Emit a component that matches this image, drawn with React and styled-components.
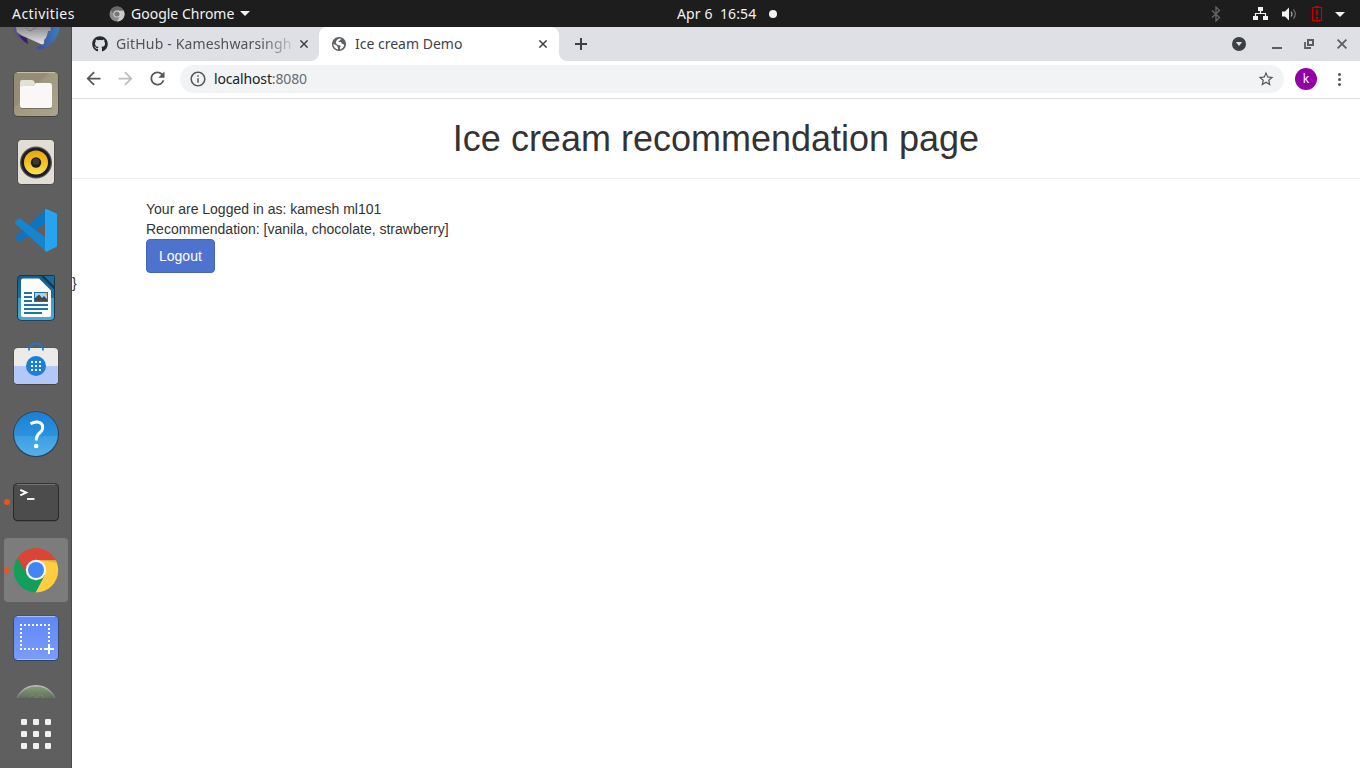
import React from "react";
import styled, { createGlobalStyle, css } from "styled-components";
import { FaGithub } from "react-icons/fa";
import {
  MdArrowBack,
  MdArrowForward,
  MdRefresh,
  MdInfoOutline,
  MdStarBorder,
} from "react-icons/md";

const GlobalStyle = createGlobalStyle`
  *, *::before, *::after { box-sizing: border-box; }
  html, body { margin: 0; padding: 0; background: #fff; }
  body { overflow: hidden; }
  svg { display: block; flex: none; }
`;

const Desktop = styled.div`
  width: 1360px;
  height: 768px;
  display: flex;
  flex-direction: column;
  overflow: hidden;
  font-family: "Noto Sans", "Open Sans", sans-serif;
`;

/* ---------- top bar ---------- */

const TopBar = styled.header`
  flex: none;
  height: 27px;
  display: grid;
  grid-template-columns: 677px auto 1fr;
  align-items: center;
  background: #1d1d1d;
  color: #f2f2f2;
  font-size: 14px;
  line-height: 26px;
  white-space: pre;
`;

const BarLeft = styled.div`
  display: flex;
  align-items: center;
  padding-left: 12px;
`;

const BarLabel = styled.span`
  width: ${(p) => p.$width}px;
  letter-spacing: ${(p) => p.$track || 0}px;
`;

const AppMenu = styled.div`
  display: flex;
  align-items: center;
  margin-left: 34px;
  gap: 6px;
`;

const Clock = styled.div`
  display: flex;
  align-items: center;
  gap: 12px;
`;

const Dot = styled.i`
  width: 8px;
  height: 8px;
  border-radius: 50%;
  background: #f2f2f2;
`;

const StatusArea = styled.div`
  display: flex;
  align-items: center;
  justify-content: flex-end;
  padding-right: 14px;
`;

/* ---------- dock ---------- */

const Workspace = styled.div`
  flex: 1;
  min-height: 0;
  display: flex;
`;

const Dock = styled.nav`
  flex: none;
  width: 72px;
  display: flex;
  flex-direction: column;
  background: #5f5f5f;
  border-right: 1px solid #4b4b4b;
`;

const DockList = styled.div`
  height: 671px;
  overflow: hidden;
`;

const DockSlot = styled.div`
  position: relative;
  height: 68px;
  padding: 2px 3px 2px 4px;
  &:first-child {
    margin-top: -35px;
  }
  ${(p) =>
    p.$running &&
    css`
      &::before {
        content: "";
        position: absolute;
        left: 4px;
        top: 31px;
        width: 6px;
        height: 6px;
        border-radius: 50%;
        background: #e95420;
        z-index: 1;
      }
    `}
`;

const SlotFace = styled.div`
  width: 64px;
  height: 64px;
  border-radius: 4px;
  background: ${(p) => (p.$active ? "#7c7c7c" : "transparent")};
`;

const AppsGrid = styled.div`
  display: grid;
  grid-template-columns: repeat(3, 6px);
  grid-auto-rows: 6px;
  gap: 6px;
  padding: 21px 0 0 21px;
`;

const AppsCell = styled.i`
  border-radius: 1px;
  background: #f0f0ee;
`;

/* ---------- browser ---------- */

const Browser = styled.main`
  flex: 1;
  min-width: 0;
  display: flex;
  flex-direction: column;
  background: #fff;
`;

const TabStrip = styled.div`
  flex: none;
  height: 34px;
  display: flex;
  background: #dee0e5;
  padding-left: 8px;
`;

const Tab = styled.div`
  position: relative;
  display: flex;
  align-items: center;
  height: 34px;
  width: ${(p) => p.$width}px;
  padding: 0 ${(p) => (p.$active ? 12 : 11)}px 0 12px;
  color: ${(p) => (p.$active ? "#3f4247" : "#505358")};
  font-size: 14px;
  ${(p) =>
    p.$active &&
    css`
      background: #fff;
      border-radius: 8px 8px 0 0;
      &::before,
      &::after {
        content: "";
        position: absolute;
        bottom: 0;
        width: 8px;
        height: 8px;
      }
      &::before {
        left: -8px;
        background: radial-gradient(circle at 0 0, transparent 7.5px, #fff 8.2px);
      }
      &::after {
        right: -8px;
        background: radial-gradient(circle at 100% 0, transparent 7.5px, #fff 8.2px);
      }
    `}
`;

const TabTitle = styled.span`
  flex: 1;
  min-width: 0;
  margin: 0 ${(p) => (p.$fade ? 9 : 12)}px 0 8px;
  overflow: hidden;
  white-space: nowrap;
  line-height: 34px;
  letter-spacing: ${(p) => p.$track || 0}px;
  ${(p) =>
    p.$fade &&
    css`
      mask-image: linear-gradient(90deg, #000 calc(100% - 30px), rgba(0, 0, 0, 0.2));
    `}
`;

const NewTab = styled.div`
  display: flex;
  align-items: center;
  margin-left: 16px;
`;

const WindowControls = styled.div`
  margin-left: auto;
  display: flex;
  align-items: center;
  padding-right: 12px;
`;

const Toolbar = styled.div`
  flex: none;
  height: 38px;
  display: flex;
  align-items: center;
  padding: 0 11px 2px;
  border-bottom: 1px solid #dcdce1;
  color: #54575c;
`;

const NavButtons = styled.div`
  display: flex;
  gap: 11px;
  width: 97px;
`;

const AddressBar = styled.div`
  flex: 1;
  height: 28px;
  display: flex;
  align-items: center;
  border-radius: 14px;
  padding: 0 9px;
  background: #f1f3f4;
  font-size: 14px;
`;

const Url = styled.span`
  flex: 1;
  margin-left: 7px;
  color: #6a6d72;
  letter-spacing: -0.15px;
  b {
    font-weight: 400;
    color: #202124;
  }
`;

const Avatar = styled.div`
  width: 22px;
  height: 22px;
  margin: 0 12px 0 11px;
  border-radius: 50%;
  background: #9200a6;
  color: #fff;
  font-size: 12px;
  line-height: 22px;
  text-align: center;
`;

/* ---------- web page ---------- */

const Page = styled.div`
  flex: 1;
  background: #fff;
  color: #333;
  font-family: "Liberation Sans", Arial, sans-serif;
  font-size: 14px;
  line-height: 20px;
`;

const Title = styled.h1`
  margin: 20px 0 0;
  font-size: 36px;
  font-weight: 400;
  line-height: 39px;
  text-align: center;
`;

const Rule = styled.hr`
  margin: 20px 0;
  border: 0;
  border-top: 1px solid #eee;
`;

const Container = styled.div`
  width: 1170px;
  margin: 0 auto;
  padding: 0 15px;
`;

const LogoutButton = styled.button`
  display: block;
  height: 34px;
  padding: 6px 12px;
  border: 1px solid #4366bb;
  border-radius: 4px;
  background: #4e73cf;
  color: #fff;
  font: inherit;
`;

/* ---------- drawings ---------- */

const DockArt = ({ children }) => (
  <svg width="64" height="64" viewBox="4 2 64 64">
    {children}
  </svg>
);

const Thunderbird = () => (
  <DockArt>
    <defs>
      <linearGradient id="tb" x1="0" x2="1">
        <stop offset="0" stopColor="#3f4a9c" />
        <stop offset="1" stopColor="#3a7fc0" />
      </linearGradient>
      <linearGradient id="tbw" x1="0" x2="0" y1="34" y2="52" gradientUnits="userSpaceOnUse">
        <stop offset="0" stopColor="#858589" />
        <stop offset="1" stopColor="#e4e4ea" />
      </linearGradient>
    </defs>
    <path d="M13 34Q14 42 20 47L28 52L26 48L20 43L16 40L15 34Z" fill="#54508f" />
    <path d="M19 43L27 46L28 52Q22 49 19 43Z" fill="#3a2060" />
    <path d="M15 32L17 40L22 43.5L43 53L48 41L51 38L50 32Z" fill="url(#tbw)" />
    <path d="M26 36L30 39L37 35" fill="none" stroke="#777" strokeWidth="1" />
    <path d="M53 34L52 39L48 39L47 45L44 48L45 52L40 53L36 56L39 57.5Q48 56 54 49Q59 42 60 34Z" fill="url(#tb)" />
  </DockArt>
);

const Files = () => (
  <DockArt>
    <defs>
      <linearGradient id="fi" x1="0" y1="0" x2="1" y2="1">
        <stop offset=".4" stopColor="#958c78" />
        <stop offset=".42" stopColor="#a0977f" />
        <stop offset="1" stopColor="#aca48f" />
      </linearGradient>
    </defs>
    <rect x="13.5" y="11.7" width="45" height="45" rx="4.5" fill="#3f3c35" />
    <rect x="14" y="12" width="44" height="44" rx="4" fill="url(#fi)" />
    <path d="M17 12.6H55" stroke="#c9c3b2" />
    <path d="M20 25V22Q20 20 22 20H32Q34 20 35 23L36 25H50V30H20Z" fill="#e2dfd3" />
    <path d="M20 28Q20 26 22 26H33L36 23H50Q52 23 52 25V47Q52 49 50 49H22Q20 49 20 47Z" fill="#766f5d" />
    <path d="M20 27Q20 26 22 26H33L36 23H50Q52 23 52 25V46Q52 48 50 48H22Q20 48 20 46Z" fill="#f9f8f6" />
  </DockArt>
);

const MusicPlayer = () => (
  <DockArt>
    <defs>
      <linearGradient id="mu" x1="0" x2="0" y1="0" y2="1">
        <stop offset="0" stopColor="#e9a60c" />
        <stop offset=".5" stopColor="#f3c021" />
        <stop offset="1" stopColor="#f9df5c" />
      </linearGradient>
    </defs>
    <rect x="17.5" y="11.7" width="37" height="45" rx="4" fill="#454440" />
    <rect x="18" y="12" width="36" height="44" rx="3.5" fill="#e2ded3" />
    <circle cx="36" cy="34.5" r="16" fill="#55565a" />
    <circle cx="36" cy="34.5" r="14.8" fill="#1c1d28" />
    <circle cx="36" cy="34.5" r="12" fill="url(#mu)" />
    <circle cx="36" cy="34.5" r="5.2" fill="#1d1d1d" />
    <circle cx="36" cy="33.5" r="3.2" fill="#383838" />
  </DockArt>
);

const CodeEditor = () => (
  <DockArt>
    <path d="M46 13L15.3 41Q14.6 42 15.4 43L18.3 45.6Q19.2 46.3 20.2 45.6L46 26.4Z" fill="#0e74bd" />
    <path d="M46 55.5L15.3 27.5Q14.6 26.5 15.4 25.5L18.3 22.6Q19.2 22 20.2 22.6L46 42Z" fill="#1585cf" />
    <path d="M46.5 13L56 17.2Q57 17.8 57 19V49.5Q57 50.6 56 51L46.5 55.7Q45 56 45 54.5V14Q45 12.6 46.5 13Z" fill="#28a3f0" />
  </DockArt>
);

const Writer = () => (
  <DockArt>
    <defs>
      <linearGradient id="wr" x1="0" x2="0" y1="0" y2="1">
        <stop offset="0" stopColor="#12608f" />
        <stop offset=".5" stopColor="#1a70a2" />
        <stop offset=".51" stopColor="#3a9ac8" />
        <stop offset="1" stopColor="#4bacd5" />
      </linearGradient>
    </defs>
    <path d="M22 11H53Q55 11 55 13V52Q55 56.7 50 56.7H22Q17 56.7 17 52V16Q17 11 22 11Z" fill="#16384c" />
    <path d="M22 12H41L54 25V52Q54 56 50 56H22Q18 56 18 52V16Q18 12 22 12Z" fill="url(#wr)" />
    <path d="M44 12H54V22Z" fill="#1a6b9c" />
    <path d="M43 12.8L54 24" stroke="#17394d" strokeWidth="1.3" />
    <path d="M23 14.5H39L51 26.5V51Q51 53 49 53H23Q21 53 21 51V16.5Q21 14.5 23 14.5Z" fill="#fcfcfc" />
    <path d="M24 29H32M24 33H32M24 37H32M24 41H48M24 45H48M24 49H42" stroke="#1b74a5" strokeWidth="2" />
    <rect x="34" y="28" width="14" height="10" fill="#1b74a5" />
    <rect x="35" y="29" width="12" height="8" fill="#a8d4ee" />
    <path d="M35 37V34L39 30.5L42 34L44 32L47 35V37Z" fill="#474747" />
    <path d="M44 29H47V32Z" fill="#f6b51e" />
  </DockArt>
);

const Software = () => (
  <DockArt>
    <rect x="13.5" y="15.8" width="45" height="37.2" rx="4.4" fill="#43444a" />
    <rect x="14" y="16" width="44" height="36" rx="4" fill="#ebebea" />
    <path d="M14 34H58V48Q58 52 54 52H18Q14 52 14 48Z" fill="#b4c8f7" />
    <path d="M28.8 18.5A7.2 7.2 0 0 1 43.2 18.5" fill="none" stroke="#1b78d0" strokeWidth="1.8" />
    <circle cx="36" cy="34" r="10" fill="#1b7fda" />
    <path d="M31 30H42M31 34H42M31 38H42" stroke="#fff" strokeWidth="2" strokeDasharray="2 2" />
  </DockArt>
);

const Help = () => (
  <DockArt>
    <defs>
      <linearGradient id="he" x1="0" x2="0" y1="0" y2="1">
        <stop offset="0" stopColor="#1b7fd6" />
        <stop offset=".54" stopColor="#2c92dd" />
        <stop offset=".56" stopColor="#3c9fe3" />
        <stop offset="1" stopColor="#53b1ea" />
      </linearGradient>
    </defs>
    <circle cx="36" cy="34.2" r="23" fill="#2c4254" />
    <circle cx="36" cy="34" r="22" fill="url(#he)" />
    <path d="M30.5 23.8Q34 21.8 37.4 22Q42.7 22.6 42.7 27.5Q42.7 30.4 39.5 33Q36.3 35.5 36.3 40.5" fill="none" stroke="#fff" strokeWidth="2.9" />
    <circle cx="36.2" cy="46" r="2.3" fill="#fff" />
  </DockArt>
);

const Terminal = () => (
  <DockArt>
    <rect x="13" y="15.2" width="46" height="38" rx="4.5" fill="#2a2a2a" />
    <rect x="14" y="16" width="44" height="36" rx="3.8" fill="#4c4c4c" />
    <path d="M17 16.6H55" stroke="#747474" />
    <path d="M20.3 21.8L26.2 24.6L20.3 27.4" fill="none" stroke="#fff" strokeWidth="2" />
    <path d="M27 31H34.5" stroke="#fff" strokeWidth="1.8" />
  </DockArt>
);

const ChromeMark = () => (
  <DockArt>
    <defs>
      <clipPath id="disc">
        <circle cx="36" cy="34.2" r="22.2" />
      </clipPath>
    </defs>
    <g clipPath="url(#disc)">
      <path d="M12 12H36V58H12Z" fill="#119f5a" />
      <path d="M36 24H60V58H34.7L44.7 39L40 28Z" fill="#fecd40" />
      <path d="M12 10H60V24.2H36L27.3 39L17.5 22Z" fill="#dc4437" />
      <path d="M27.3 39L36 58H34.7L44.7 39L36 34Z" fill="#119f5a" />
    </g>
    <path d="M42 24.2H55.8L56.6 27Z" fill="#c9a02f" opacity=".5" />
    <circle cx="36" cy="34" r="10.2" fill="#f4f4f4" />
    <circle cx="36" cy="34" r="8" fill="#4285f4" />
  </DockArt>
);

const Screenshot = () => (
  <DockArt>
    <defs>
      <linearGradient id="sc" x1="0" x2="0" y1="0" y2="1">
        <stop offset="0" stopColor="#5e87f5" />
        <stop offset="1" stopColor="#7b9dfa" />
      </linearGradient>
    </defs>
    <rect x="13.3" y="11.5" width="45.4" height="45.4" rx="4.6" fill="#2f416f" />
    <rect x="14" y="12" width="44" height="44" rx="4" fill="url(#sc)" />
    <path d="M17 12.6H55M17 55.5H55" stroke="#a9c0fb" />
    <path d="M20 21H50M20 45H44" stroke="#fff" strokeWidth="2" strokeDasharray="2 2" />
    <path d="M21 24V44M49 24V40" stroke="#fff" strokeWidth="2" strokeDasharray="2 2" />
    <path d="M49 40V50M44 45H54" stroke="#fff" strokeWidth="2" />
  </DockArt>
);

const GreenApp = () => (
  <DockArt>
    <defs>
      <linearGradient id="ga" x1="0" x2="0" y1="13" y2="27" gradientUnits="userSpaceOnUse">
        <stop offset="0" stopColor="#87a478" />
        <stop offset="1" stopColor="#5f6a5a" />
      </linearGradient>
      <linearGradient id="gb" x1="0" x2="0" y1="13" y2="27" gradientUnits="userSpaceOnUse">
        <stop offset="0" stopColor="#c4c4c4" />
        <stop offset="1" stopColor="#6c6c6c" />
      </linearGradient>
    </defs>
    <circle cx="36" cy="34.5" r="20.8" fill="url(#ga)" stroke="url(#gb)" strokeWidth="1.5" />
    <path d="M29 25Q31 21 35 24L37 27M37 27Q38 22 42 23Q44 24 43 27" fill="none" stroke="#7f8e79" strokeWidth=".8" />
  </DockArt>
);

const MonoChrome = () => (
  <svg width="16" height="16" viewBox="0 0 16 16">
    <circle cx="8" cy="8" r="7.5" fill="#8a8a8a" />
    <path d="M8 4.5H14.7A7.5 7.5 0 0 1 8 15.5L11 10Z" fill="#c9c9c9" />
    <path d="M1.6 4.2A7.5 7.5 0 0 1 14.6 4.5H8L5 8Z" fill="#686868" />
    <circle cx="8" cy="8" r="3.6" fill="#d8d8d8" />
    <circle cx="8" cy="8" r="2.6" fill="#777" />
  </svg>
);

const Caret = () => (
  <svg width="10" height="5" viewBox="0 0 10 5">
    <path d="M0 0H10L5 5Z" fill="#f2f2f2" />
  </svg>
);

const StatusIcons = () => (
  <svg width="136" height="20" viewBox="1210 3 136 20">
    <path d="M1212 9.5L1219.5 16.5L1216 20V6L1219.5 9.5L1212 16.5" fill="none" stroke="#666" strokeWidth="1.3" />
    <g fill="#f2f2f2">
      <rect x="1258" y="6" width="5" height="4" />
      <rect x="1253" y="15" width="5" height="4" />
      <rect x="1263" y="15" width="5" height="4" />
      <path d="M1282 10.5H1285L1289 6.5V19.5L1285 15.5H1282Z" />
      <path d="M1335 11H1345L1340 16Z" />
    </g>
    <path d="M1260.5 9V12.5M1255.5 15V12.5H1265.5V15" fill="none" stroke="#f2f2f2" strokeWidth="1.2" />
    <path d="M1291 10.5Q1293 13 1291 15.5" fill="none" stroke="#aaa" strokeWidth="1.2" />
    <path d="M1293.3 8.3Q1297.4 13 1293.3 17.7" fill="none" stroke="#707070" strokeWidth="1.2" />
    <path d="M1312.5 6.5H1321.5V19.5H1312.5Z" fill="none" stroke="#c80000" strokeWidth="1.1" />
    <path d="M1315 5.5H1319" stroke="#c80000" />
    <path d="M1317 8.5V14.5M1317 16V18" stroke="#c80000" strokeWidth="1.8" />
  </svg>
);

const Globe = () => (
  <svg width="16" height="16" viewBox="0 0 16 16">
    <circle cx="8" cy="8" r="7.1" fill="#5f6368" />
    <path d="M9.6 2.4Q10.4 4 8.8 4.6Q7.4 4.8 7.4 6H9.8Q10.8 6.4 10.8 8H12Q13 8.4 13.2 9.4Q12.2 12.6 9 13.5V11.6Q10 11 9.4 9.8Q8.6 9.2 6.8 9Q5.2 8.4 4.8 6.6Q5 4.4 6.8 3.2Q8 2.4 9.6 2.4Z" fill="#fff" />
    <path d="M2.3 8Q4 8.2 5.4 9.4Q6.8 9.8 6.6 11.2Q7.4 12 7 13.6Q2.6 12.4 2.3 8Z" fill="#fff" />
  </svg>
);

const Cross = ({ size = 8, color = "#3c4043" }) => (
  <svg width={size} height={size} viewBox="0 0 8 8">
    <path d="M.4 .4L7.6 7.6M7.6 .4L.4 7.6" stroke={color} strokeWidth="1.5" />
  </svg>
);

const MenuDots = () => (
  <svg width="20" height="20" viewBox="0 0 20 20">
    <g fill="#54575c">
      <circle cx="10.5" cy="5.5" r="1.5" />
      <circle cx="10.5" cy="10.5" r="1.5" />
      <circle cx="10.5" cy="15.5" r="1.5" />
    </g>
  </svg>
);

const ControlIcons = () => (
  <svg width="116" height="16" viewBox="1232 36 116 16">
    <circle cx="1239" cy="44" r="7" fill="#3c4043" />
    <path d="M1235.8 42H1242.2L1239 46Z" fill="#dee0e5" />
    <path d="M1272 48H1282" stroke="#5a5d62" strokeWidth="2" />
    <path d="M1308 40H1313V45H1308Z" fill="none" stroke="#5a5d62" strokeWidth="2" />
    <path d="M1305 42V48H1311" fill="none" stroke="#5a5d62" strokeWidth="1.8" />
    <path d="M1337.6 39.6L1346.4 48.4M1346.4 39.6L1337.6 48.4" stroke="#5a5d62" strokeWidth="1.8" />
  </svg>
);

const dockApps = [
  { art: Thunderbird },
  { art: Files },
  { art: MusicPlayer },
  { art: CodeEditor },
  { art: Writer },
  { art: Software },
  { art: Help },
  { art: Terminal, running: true },
  { art: ChromeMark, running: true, active: true },
  { art: Screenshot },
  { art: GreenApp },
];

export default function App() {
  return (
    <Desktop>
      <GlobalStyle />
      <TopBar>
        <BarLeft>
          <BarLabel $width={63} $track={0.45}>Activities</BarLabel>
          <AppMenu>
            <MonoChrome />
            <BarLabel $width={103}>Google Chrome</BarLabel>
            <Caret />
          </AppMenu>
        </BarLeft>
        <Clock>
          <BarLabel $width={80} $track={0.1}>{"Apr 6  16:54"}</BarLabel>
          <Dot />
        </Clock>
        <StatusArea>
          <StatusIcons />
        </StatusArea>
      </TopBar>
      <Workspace>
        <Dock>
          <DockList>
            {dockApps.map(({ art: Art, running, active }, i) => (
              <DockSlot key={i} $running={running}>
                <SlotFace $active={active}>
                  <Art />
                </SlotFace>
              </DockSlot>
            ))}
          </DockList>
          <AppsGrid>
            {Array.from({ length: 9 }, (_, i) => (
              <AppsCell key={i} />
            ))}
          </AppsGrid>
        </Dock>
        <Browser>
          <TabStrip>
            <Tab $width={239}>
              <FaGithub size={16} color="#24292e" />
              <TabTitle $fade $track={0.15}>GitHub - Kameshwarsingh</TabTitle>
              <Cross />
            </Tab>
            <Tab $active $width={240}>
              <Globe />
              <TabTitle>Ice cream Demo</TabTitle>
              <Cross />
            </Tab>
            <NewTab>
              <svg width="12" height="12" viewBox="0 0 12 12">
                <path d="M6 0V12M0 6H12" stroke="#3c4043" strokeWidth="2" />
              </svg>
            </NewTab>
            <WindowControls>
              <ControlIcons />
            </WindowControls>
          </TabStrip>
          <Toolbar>
            <NavButtons>
              <MdArrowBack size={21} />
              <MdArrowForward size={21} color="#bcbec1" />
              <MdRefresh size={21} />
            </NavButtons>
            <AddressBar>
              <MdInfoOutline size={18} />
              <Url>
                <b>localhost</b>:8080
              </Url>
              <MdStarBorder size={18} />
            </AddressBar>
            <Avatar>k</Avatar>
            <MenuDots />
          </Toolbar>
          <Page>
            <Title>Ice cream recommendation page</Title>
            <Rule />
            <Container>
              <div>Your are Logged in as: kamesh ml101</div>
              <div>Recommendation: [vanila, chocolate, strawberry]</div>
              <LogoutButton>Logout</LogoutButton>
            </Container>
            <div>{"}"}</div>
          </Page>
        </Browser>
      </Workspace>
    </Desktop>
  );
}
